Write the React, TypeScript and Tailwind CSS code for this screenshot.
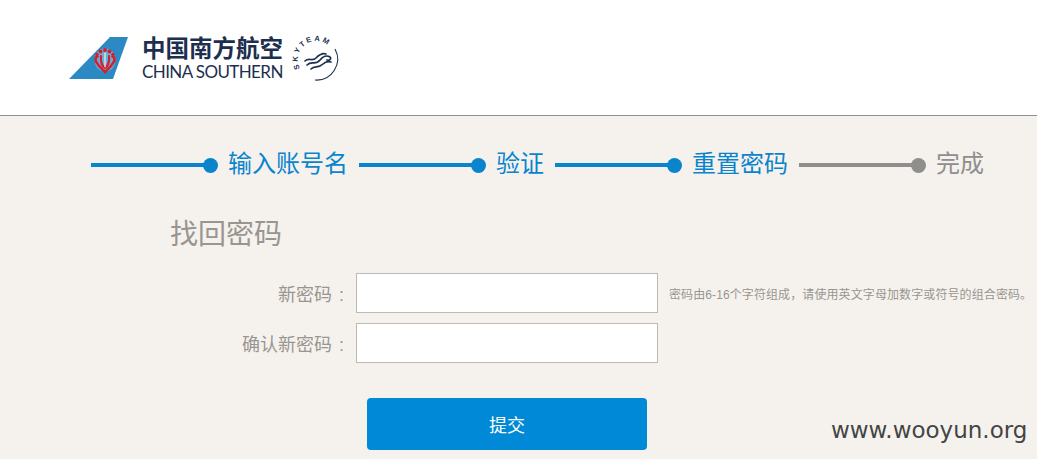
import React from "react";

const cjk = "font-['Liberation_Sans','Noto_Sans_CJK_SC',sans-serif]";

const steps = [
  { label: "输入账号名", done: true, labelWidth: "w-[120px]" },
  { label: "验证", done: true, labelWidth: "w-[48px]" },
  { label: "重置密码", done: true, labelWidth: "w-[96px]" },
  { label: "完成", done: false, labelWidth: "w-[49px]" },
];

function TailLogo() {
  return (
    <svg width="60" height="44" viewBox="0 0 60 44" className="shrink-0">
      <polygon points="41,0 59,0 44,42 0,42" fill="#2b8ac4" />
      {/* kapok flower, white halo first and then the red on top */}
      <ellipse cx="36" cy="23" rx="10.5" ry="11.5" fill="#fff" opacity="0.3" />
      <g fill="none" stroke="#d3202e" strokeLinecap="round">
        <path d="M28.5 19.5 C26 20 26 24 28 26 C30 30 33 32 36 35 C39 32 42 30 44 26 C46 24 46 20 43.5 19.5" strokeWidth="2.6" />
        <path d="M32 19 C31.5 24 33 29 36 31 C39 29 40.5 24 40 19" strokeWidth="2.2" />
        <path d="M36 16 V30" stroke="#fff" strokeWidth="1" />
      </g>
      <g fill="#d3202e">
        <circle cx="36" cy="13" r="2" />
        <circle cx="31.5" cy="14.5" r="2" />
        <circle cx="40.5" cy="14.5" r="2" />
        <circle cx="28" cy="17.5" r="1.8" />
        <circle cx="44" cy="17.5" r="1.8" />
      </g>
    </svg>
  );
}

function SkyTeamLogo() {
  return (
    <svg width="48" height="52" viewBox="0 0 48 52" className="shrink-0 overflow-visible text-[#1c2f4f]">
      <defs>
        <path id="skyArc" d="M6 35.5 A18.5 18.5 0 1 1 39.5 20" />
      </defs>
      <text fontSize="7.5" fontFamily="'Liberation Sans', sans-serif" fontWeight="700" letterSpacing="2.2" fill="currentColor">
        <textPath href="#skyArc">SKYTEAM</textPath>
      </text>
      <path d="M41 16 A21 21 0 0 1 21 47" fill="none" stroke="currentColor" strokeWidth="1.1" />
      <g fill="none" stroke="currentColor" strokeWidth="1.7" strokeLinecap="round">
        <path d="M11 28 C15 24 18 29 22 25 C26 21 29 20 32 21" />
        <path d="M13 32 C18 27 21 33 26 27 C29 23 33 22 36 24 C38 26 35 28 33 27" />
        <path d="M17 36 C21 32 24 36 29 31 C31 29 34 28 37 29" />
      </g>
    </svg>
  );
}

function Field({ label, hint }: { label: string; hint?: string }) {
  return (
    <div className="flex items-center">
      <label className="w-[347px] pr-[3px] pt-[3px] text-right text-[18px] leading-[24px] text-[#999590]">
        {label}
        <span className="ml-[7px]">:</span>
      </label>
      <input type="password" className="ml-[9px] h-[40px] w-[302px] border border-[#bdbab5] bg-white" />
      {hint && <span className="ml-[11px] whitespace-nowrap pt-[3px] text-[12px] leading-[16px] tracking-[0.1px] text-[#999590]">{hint}</span>}
    </div>
  );
}

export default function App() {
  return (
    <div className={`relative h-screen overflow-hidden bg-[#f5f2ee] ${cjk}`}>
      <header className="flex h-[116px] items-start border-b border-[#8f8f8f] bg-white pl-[69px] pt-[37px]">
        <TailLogo />
        <div className="ml-[13px] mt-[-1px] flex w-[143px] flex-col text-[#1c2f4f]">
          <span className="whitespace-nowrap text-[23.5px] font-semibold leading-[26px]">中国南方航空</span>
          <span className="whitespace-nowrap font-['Lato',sans-serif] text-[17px] leading-[20px] tracking-[-0.6px]">CHINA SOUTHERN</span>
        </div>
        <div className="ml-[9px] mt-[-4px]">
          <SkyTeamLogo />
        </div>
      </header>

      <main>
        <div className="mt-[32px] flex h-[34px] items-center gap-[11px] pl-[91px]">
          {steps.map((step) => (
            <div key={step.label} className="flex items-center">
              <div className={`h-[4px] w-[116px] ${step.done ? "bg-[#0a84cd]" : "bg-[#8f8e8d]"}`} />
              <div className={`ml-[-4px] h-[15px] w-[15px] rounded-full ${step.done ? "bg-[#0a84cd]" : "bg-[#8f8e8d]"}`} />
              <span className={`ml-[10px] whitespace-nowrap pb-[3px] text-[24px] leading-[31px] ${step.labelWidth} ${step.done ? "text-[#0a84cd]" : "text-[#8f8e8d]"}`}>
                {step.label}
              </span>
            </div>
          ))}
        </div>

        <h1 className="mt-[33px] pl-[170px] text-[28px] leading-[40px] text-[#999590]">找回密码</h1>

        <div className="mt-[18px] flex flex-col gap-[10px]">
          <Field label="新密码" hint="密码由6-16个字符组成，请使用英文字母加数字或符号的组合密码。" />
          <Field label="确认新密码" />
        </div>

        <button className="ml-[367px] mt-[35px] block h-[52px] w-[280px] rounded-[4px] bg-[#0089d6] pt-[5px] text-[18px] text-white">
          提交
        </button>
      </main>

      <div className="absolute left-[831px] top-[415px] whitespace-nowrap font-['DejaVu_Sans',sans-serif] text-[23px] leading-[30px] text-[#444]">
        www.wooyun.org
      </div>
    </div>
  );
}
